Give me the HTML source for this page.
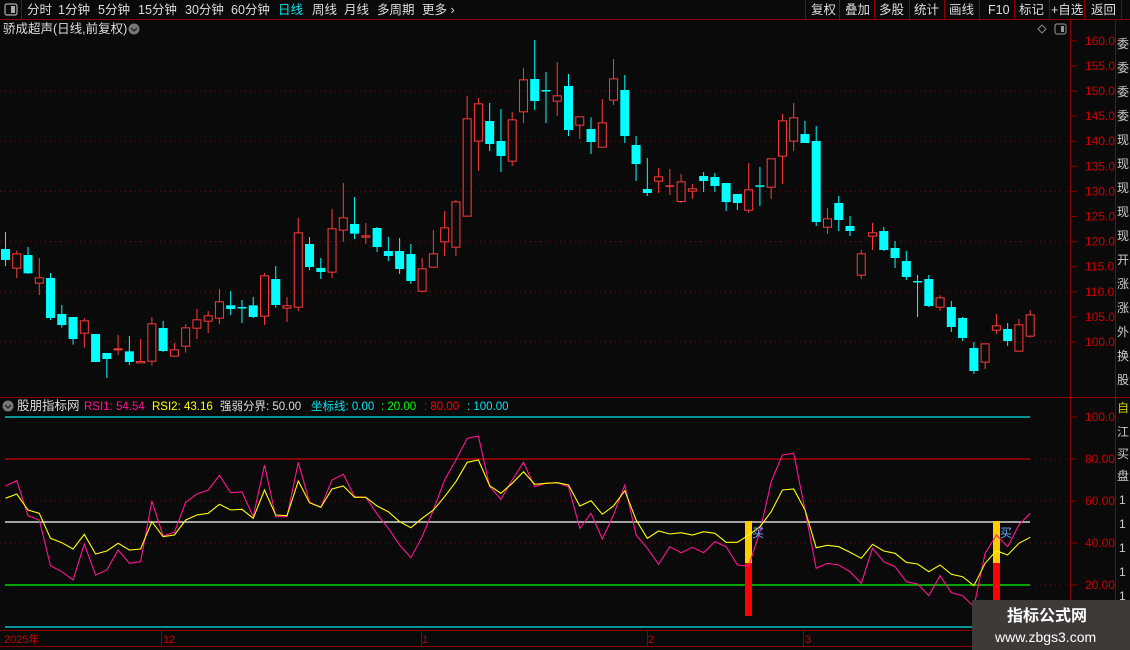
<!DOCTYPE html>
<html><head><meta charset="utf-8"><style>
body{margin:0;background:#0a0a0a;width:1130px;height:650px;overflow:hidden;font-family:"Liberation Sans","Noto Sans CJK SC",sans-serif;}
svg{position:absolute;left:0;top:0}
text{font-family:"Liberation Sans","Noto Sans CJK SC",sans-serif}
</style></head><body>
<svg id="s" width="1130" height="650" xmlns="http://www.w3.org/2000/svg">
<rect width="1130" height="650" fill="#0a0a0a"/>
<rect x="0" y="0" width="1130" height="19" fill="#0a0a0a"/>
<line x1="0" y1="19.5" x2="1130" y2="19.5" stroke="#8b0000"/>
<line x1="21.5" y1="0" x2="21.5" y2="19" stroke="#8b0000"/>
<rect x="5" y="4" width="12" height="11" rx="2" fill="none" stroke="#aaa" stroke-width="1.2"/><rect x="11" y="6" width="4" height="7" fill="#aaa"/>
<g font-size="12.5" fill="#ddd">
<text x="27" y="14">分时</text><text x="58" y="14">1分钟</text><text x="98" y="14">5分钟</text><text x="138" y="14">15分钟</text><text x="185" y="14">30分钟</text><text x="231" y="14">60分钟</text>
<text x="278" y="14" fill="#00e5ee">日线</text><text x="312" y="14">周线</text><text x="344" y="14">月线</text><text x="377" y="14">多周期</text><text x="422" y="14">更多 ›</text>
</g>
<g stroke="#8b0000"><line x1="805.5" y1="0" x2="805.5" y2="19"/><line x1="839.5" y1="0" x2="839.5" y2="19"/><line x1="874.5" y1="0" x2="874.5" y2="19"/><line x1="909.5" y1="0" x2="909.5" y2="19"/><line x1="944.5" y1="0" x2="944.5" y2="19"/><line x1="979.5" y1="0" x2="979.5" y2="19"/><line x1="1014.5" y1="0" x2="1014.5" y2="19"/><line x1="1049.5" y1="0" x2="1049.5" y2="19"/><line x1="1084.5" y1="0" x2="1084.5" y2="19"/><line x1="1121.5" y1="0" x2="1121.5" y2="19"/></g>
<g font-size="12.5" fill="#ddd">
<text x="811" y="14">复权</text><text x="845" y="14">叠加</text><text x="879" y="14">多股</text><text x="914" y="14">统计</text><text x="949" y="14">画线</text><text x="988" y="14">F10</text><text x="1019" y="14">标记</text><text x="1051" y="14">+自选</text><text x="1091" y="14">返回</text>
</g>
<text x="3" y="33" font-size="12.5" fill="#ddd">骄成超声(日线,前复权)</text>
<circle cx="134" cy="29" r="5.5" fill="#777"/><path d="M131 28l3 3 3-3" stroke="#222" fill="none" stroke-width="1.3"/>
<path d="M1042 25l4 4-4 4-4-4z" fill="none" stroke="#888"/>
<rect x="1055" y="24" width="11" height="10" rx="2" fill="none" stroke="#999"/><rect x="1061" y="26" width="3" height="6" fill="#999"/>
<line x1="1070.5" y1="20" x2="1070.5" y2="646" stroke="#8b0000"/>
<line x1="1115.5" y1="20" x2="1115.5" y2="646" stroke="#8b0000"/>
<line x1="0" y1="397.5" x2="1130" y2="397.5" stroke="#8b0000"/>
<line x1="0" y1="630.5" x2="1130" y2="630.5" stroke="#8b0000"/>
<line x1="0" y1="646.5" x2="1130" y2="646.5" stroke="#8b0000"/>
<g id="grid"></g>
<g id="cand"></g>
<circle cx="8" cy="406" r="5.5" fill="#777"/><path d="M5 405l3 3 3-3" stroke="#222" fill="none" stroke-width="1.3"/>
<g font-size="11.5">
<text x="17" y="410" fill="#ddd" font-size="12.5">股朋指标网</text>
<text x="84" y="410" fill="#ff1493">RSI1: 54.54</text>
<text x="152" y="410" fill="#ffff00">RSI2: 43.16</text>
<text x="220" y="410" fill="#ddd">强弱分界: 50.00</text>
<text x="311" y="410" fill="#00e5ee">坐标线: 0.00</text>
<text x="381" y="410" fill="#00ff00">: 20.00</text>
<text x="424" y="410" fill="#ff0000">: 80.00</text>
<text x="467" y="410" fill="#00e5ee">: 100.00</text>
</g>
<g id="ind"></g>
<g font-size="11" fill="#cc0000">
<text x="4" y="643">2025年</text><text x="163" y="643">12</text><text x="422" y="643">1</text><text x="648" y="643">2</text><text x="805" y="643">3</text>
</g>
<g stroke="#8b0000"><line x1="161.5" y1="631" x2="161.5" y2="646"/><line x1="421.5" y1="631" x2="421.5" y2="646"/><line x1="647.5" y1="631" x2="647.5" y2="646"/><line x1="803.5" y1="631" x2="803.5" y2="646"/></g>
<g font-size="12" fill="#ccc">
<text x="1117" y="48">委</text><text x="1117" y="72">委</text><text x="1117" y="96">委</text><text x="1117" y="120">委</text><text x="1117" y="144">现</text><text x="1117" y="168">现</text><text x="1117" y="192">现</text><text x="1117" y="216">现</text><text x="1117" y="240">现</text><text x="1117" y="264">开</text><text x="1117" y="288">涨</text><text x="1117" y="312">涨</text><text x="1117" y="336">外</text><text x="1117" y="360">换</text><text x="1117" y="384">股</text>
<text x="1117" y="412" fill="#cc0">自</text><text x="1117" y="436">江</text><text x="1117" y="458">买</text><text x="1117" y="480">盘</text>
<text x="1119" y="504">1</text><text x="1119" y="528">1</text><text x="1119" y="552">1</text><text x="1119" y="576">1</text><text x="1119" y="600">1</text>
</g>
<g id="wm">
<rect x="972" y="600" width="158" height="50" fill="#3f3a38"/>
<text x="1007" y="621" font-size="16" font-weight="bold" fill="#fff">指标公式网</text>
<text x="995" y="642" font-size="14" fill="#fff">www.zbgs3.com</text>
</g>
</svg>
<script>
var NS="http://www.w3.org/2000/svg";
function el(p,t,a){var e=document.createElementNS(NS,t);for(var k in a)e.setAttribute(k,a[k]);p.appendChild(e);return e;}
var g=document.getElementById('grid'),c=document.getElementById('cand'),ind=document.getElementById('ind'),svg=document.getElementById('s');
[160,155,150,145,140,135,130,125,120,115,110,105,100].forEach(function(p){
 var y=342-(p-100)*5.02;
 if(p%10==0&&p<160) el(g,'line',{x1:0,x2:1070,y1:y,y2:y,stroke:'#8b0000','stroke-dasharray':'1,4'});
 el(g,'line',{x1:1071,x2:1077,y1:y,y2:y,stroke:'#8b0000'});
 var t=el(svg,'text',{x:1085,y:y+4,'font-size':12,fill:'#cc0000'});t.textContent=p.toFixed(1);
});
var D=[['c',657,690,606,708],['r',670,716,662,744],['c',675,730,651,732],['r',742,761,684,795],['c',744,864,729,870],['c',852,885,825,893],['c',861,927,861,944],['r',871,911,864,953],['c',912,996,912,996],['c',969,987,969,1044],
['r',955,961,915,975],['c',964,996,918,1005],['r',993,1000,927,1000],['r',880,995,861,1007],['c',894,963,873,966],['r',958,980,939,980],['r',892,950,882,968],['r',868,896,837,927],['r',856,875,843,909],['r',814,866,777,882],
['c',826,837,783,855],['c',831,833,810,879],['c',826,861,801,864],['r',736,860,729,885],['c',747,825,708,833],['r',826,836,801,876],['r',607,833,564,843],['c',642,711,621,720],['c',714,726,684,747],['r',595,728,537,744],
['r',562,602,459,636],['c',582,611,501,627],['r',616,623,579,642],['c',594,651,591,666],['c',663,678,621,693],['c',663,717,624,732],['c',672,753,642,762],['r',715,785,684,787],['r',670,713,600,713],['r',592,637,543,678],
['r',514,653,510,678],['r',265,560,198,560],['r',220,335,204,423],['c',273,342,219,363],['c',333,378,237,426],['r',268,395,246,408],['r',148,247,114,279],['c',147,213,30,240],
['c',180,182,126,279],['r',196,215,96,258],['c',168,300,132,318],['r',259,287,259,327],['c',297,336,262,372],['r',277,353,207,353],['r',145,212,87,225],['c',180,318,135,339],['c',345,402,318,453],['c',477,489,384,498],
['r',439,455,414,489],['r',466,468,417,495],['r',454,516,432,519],['r',475,485,462,507],['c',438,453,426,486],['c',441,468,429,486],['c',459,516,459,543],['c',492,519,492,540],['r',478,542,399,549],['c',466,468,411,528],
['r',385,473,385,507],['r',271,380,252,462],['r',262,335,219,363],['c',312,339,273,339],['c',333,576,288,588],['r',565,593,534,612],['c',519,570,498,603],['c',588,603,558,618],['r',670,737,660,747],['r',607,620,579,660],
['c',603,660,591,663],['c',654,684,633,714],['c',693,741,663,750],['c',753,755,735,861],['c',747,828,735,831],['r',802,833,796,842],['c',831,891,813,906],['c',864,924,861,933],['c',954,1023,936,1032],['r',940,998,940,1017],
['r',886,902,852,912],['c',897,933,879,948],['r',883,965,867,965],['r',853,920,840,923]];
function X(i){return 5.5+i*11.26;}
D.forEach(function(d,i){
 var x=X(i),Y=function(z){return 30+z/3;};
 var col=d[0]=='c'?'#00ffff':'#ff3b3b';
 var bt=Y(d[1]),bb=Y(d[2]);if(bb-bt<1.5)bb=bt+1.5;
 el(c,'line',{x1:x,x2:x,y1:Y(d[3]),y2:bt,stroke:col});
 el(c,'line',{x1:x,x2:x,y1:bb,y2:Y(d[4]),stroke:col});
 if(d[0]=='c') el(c,'rect',{x:x-4.5,y:bt,width:9,height:bb-bt,fill:col});
 else el(c,'rect',{x:x-4,y:bt+.5,width:8,height:bb-bt-1,fill:'none',stroke:col});
});
[[100,'#00e5ee'],[80,'#cc0000'],[50,'#ffffff'],[20,'#00ff00'],[0,'#00e5ee']].forEach(function(a){
 var y=627-2.1*a[0];el(ind,'line',{x1:5,x2:1030,y1:y,y2:y,stroke:a[1],'stroke-width':1.2});
});
[80,60,40,20].forEach(function(v){var y=627-2.1*v;
 el(ind,'line',{x1:1030,x2:1070,y1:y,y2:y,stroke:'#8b0000','stroke-dasharray':'1,4'});
 if(v==60||v==40) el(ind,'line',{x1:0,x2:1030,y1:y,y2:y,stroke:'#8b0000','stroke-dasharray':'1,4'});
});
[100,80,60,40,20].forEach(function(v){var y=627-2.1*v;
 el(ind,'line',{x1:1071,x2:1077,y1:y,y2:y,stroke:'#8b0000'});
 var t=el(svg,'text',{x:1085,y:y+4,'font-size':12,fill:'#cc0000'});t.textContent=v==100?'100.0':v.toFixed(2);
});
var P=[198,182,287,300,437,455,480,372,465,450,390,430,425,243,348,337,247,222,210,166,218,216,290,135,290,290,127,247,262,180,163,230,232,282,325,375,413,350,270,180,120,55,48,200,238,180,127,200,
190,188,200,325,280,357,285,195,345,385,433,380,398,382,398,365,380,435,438,335,185,105,100,270,445,430,435,455,490,385,425,440,485,492,527,467,518,527,560,400,345,380,315,280];
var Yl=[235,222,270,280,355,368,387,343,402,393,370,390,387,305,350,345,300,285,280,253,270,268,295,210,285,287,183,248,262,207,198,232,232,258,275,305,323,295,270,230,185,127,120,197,220,190,155,193,
190,188,195,258,242,283,258,212,300,355,333,342,338,345,335,340,367,367,345,320,275,210,207,270,383,376,380,397,415,373,393,400,427,432,455,435,463,470,497,430,392,405,370,352];
el(ind,'rect',{x:745,y:521,width:7,height:42,fill:'#ffcc00'});el(ind,'rect',{x:745,y:563,width:7,height:53,fill:'#ff0000'});
el(ind,'rect',{x:993,y:521,width:7,height:42,fill:'#ffcc00'});el(ind,'rect',{x:993,y:563,width:7,height:40,fill:'#ff0000'});
function pl(arr,col){var s=arr.map(function(z,i){return X(i).toFixed(1)+','+(420+z/3).toFixed(1);}).join(' ');el(ind,'polyline',{points:s,fill:'none',stroke:col,'stroke-width':1.1});}
pl(P,'#ff1493');pl(Yl,'#ffff00');
var t1=el(svg,'text',{x:752,y:537,'font-size':12,fill:'#6fa8ff'});t1.textContent='买';
var t2=el(svg,'text',{x:1000,y:537,'font-size':12,fill:'#6fa8ff'});t2.textContent='买';
svg.appendChild(document.getElementById('wm'));
</script>
</body></html>
